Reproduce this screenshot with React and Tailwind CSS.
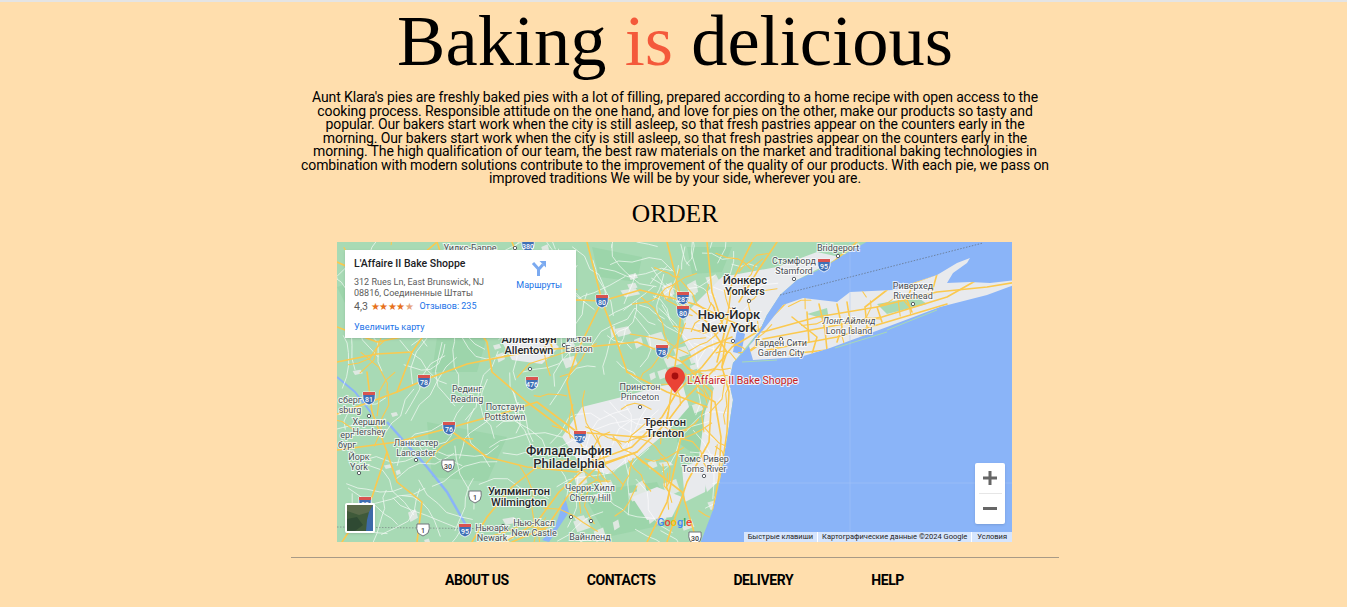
const ocean =
  'M533,-2 L503,15 486,26 460,38 443,53 430,73 423,88 412,104 396,121 392,140 396,158 391,191 383,238 376,268 363,302 L680,302 680,-2 Z';
const mainland =
  'M-2,-2 L533,-2 503,15 486,26 460,38 443,53 430,73 423,88 412,104 396,121 392,140 396,158 391,191 383,238 376,268 363,302 L-2,302 Z';
const longIsland =
  'M426,88 L446,63 466,56 500,60 513,50 556,48 576,41 600,33 620,21 633,16 630,21 616,31 610,41 633,40 653,41 680,38 680,42 650,53 603,65 550,85 493,106 463,115 416,118 412,104 Z';

const greyAreas = [
  'M350,70 L385,35 440,25 480,10 503,15 460,38 430,73 423,88 396,121 396,158 380,150 360,125 345,95 Z',
  'M385,125 L396,158 391,191 383,238 370,250 362,215 368,170 Z',
  'M245,165 L285,155 320,145 345,140 352,165 330,190 300,215 270,232 245,225 225,195 Z',
  'M170,85 L205,88 222,105 205,122 175,118 165,100 Z',
  'M295,255 L320,245 345,255 335,275 310,278 Z',
  'M345,225 L372,215 368,250 348,260 Z',
];
const darkGreen = [
  'M130,15 L185,20 205,45 165,55 120,40 Z',
  'M0,45 L60,25 110,45 75,80 20,85 Z',
  'M255,5 L305,15 300,40 262,35 Z',
  'M350,5 L395,5 385,30 355,32 Z',
  'M90,180 L170,195 150,240 95,235 Z',
  'M245,250 L320,240 340,280 270,295 Z',
  'M395,160 L375,225 340,200 345,165 Z',
  'M100,95 L150,95 140,130 95,130 Z',
];

const majorRoads = [
  'M240,58 L265,59 303,48 343,58 360,63 395,80 425,90',
  'M0,172 L60,150 87,138 130,122 200,108 250,105 300,100 325,110 345,120 370,105 395,95',
  'M0,208 L60,200 112,186 170,170 200,160 240,190 300,195 345,192',
  'M175,300 L210,285 230,255 260,225 300,210 330,180 345,160 375,130 395,105 420,90 460,50 520,0',
  'M168,300 L200,280 222,250 255,220 295,205 325,175 340,150 365,125 385,100',
  'M383,238 L390,190 392,150 385,125 388,100 395,80',
  'M376,268 L382,235 384,195 378,160 360,150',
  'M426,90 L480,75 540,65 600,50 650,45 680,40',
  'M426,97 L490,85 545,75 610,55 640,38',
  'M430,108 L500,95 550,80 610,62',
  'M452,112 L490,108 488,88 482,62',
  'M530,85 L528,65 550,48',
  'M250,0 L265,59 280,100 290,130',
  'M330,0 L345,60 340,110 330,180',
  'M415,0 L395,40 390,80 380,120',
  'M370,0 L375,50 385,80',
  'M440,0 L420,30 402,60',
  'M100,0 L120,60 150,100 155,130 190,160 230,190',
  'M30,130 L35,170 50,210 35,255 5,300',
  'M0,85 L40,100 90,90 130,70 180,60 240,58',
  'M175,0 L190,40 205,80 215,105',
  'M60,150 L75,110 110,60 120,40',
  'M110,186 L150,215 190,225 240,230 300,210',
  'M80,300 L85,260 60,240 50,210',
  'M135,300 L150,275 175,245 200,225',
  'M240,190 L230,140 240,110 265,59',
  'M345,120 L375,150 372,200 350,240 330,300',
  'M310,300 L330,260 340,215 345,190',
  'M300,215 L345,250 360,300',
  'M290,130 L330,150 370,165',
  'M345,60 L370,80 390,110 385,125',
  'M0,20 L45,40 65,30 100,0',
  'M0,120 L40,112 75,110',
  'M595,50 L600,32 576,41 570,58',
  'M500,62 L505,85 500,100',
  'M455,75 L480,95 475,112',
  'M540,65 L545,80',
  'M570,58 L575,70',
  'M470,70 L472,100',
  'M510,60 L515,92',
];

// small seeded generator, so the road net comes out the same on each run
let seed = 20240607;
function rnd() {
  seed = (seed * 1664525 + 1013904223) % 4294967296;
  return seed / 4294967296;
}

function makeRoads(count, xMin, xMax, yMin, yMax, steps, stepLen) {
  const roads = [];
  for (let i = 0; i < count; i++) {
    let x = xMin + rnd() * (xMax - xMin);
    let y = yMin + rnd() * (yMax - yMin);
    let angle = rnd() * Math.PI * 2;
    let d = `M${x.toFixed(1)},${y.toFixed(1)}`;
    for (let s = 0; s < steps; s++) {
      angle += (rnd() - 0.5) * 1.3;
      const len = stepLen * (0.6 + rnd() * 0.8);
      x += Math.cos(angle) * len;
      y += Math.sin(angle) * len;
      d += ` L${x.toFixed(1)},${y.toFixed(1)}`;
    }
    roads.push(d);
  }
  return roads;
}

function makeBlotches(count, xMin, xMax, yMin, yMax, size) {
  const spots = [];
  for (let i = 0; i < count; i++) {
    const x = xMin + rnd() * (xMax - xMin);
    const y = yMin + rnd() * (yMax - yMin);
    const w = size * (0.5 + rnd());
    const h = size * (0.4 + rnd() * 0.7);
    spots.push(
      `M${x.toFixed(1)},${y.toFixed(1)} l${w.toFixed(1)},${(-h * 0.4).toFixed(1)} l${(w * 0.3).toFixed(1)},${h.toFixed(1)} l${(-w).toFixed(1)},${(h * 0.5).toFixed(1)} Z`
    );
  }
  return spots;
}

const whiteRoads = [
  ...makeRoads(130, 0, 400, 0, 300, 5, 13),
  ...makeRoads(30, 260, 400, 0, 140, 3, 10),
];
const yellowRoads = [
  ...makeRoads(26, 0, 330, 0, 300, 4, 14),
  ...makeRoads(34, 320, 420, 20, 150, 4, 9),
  ...makeRoads(24, 220, 350, 150, 250, 4, 10),
  ...makeRoads(12, 360, 395, 130, 270, 3, 9),
  ...makeRoads(14, 440, 600, 55, 95, 2, 11),
];
const greySpots = [
  ...makeBlotches(36, 0, 390, 0, 300, 8),
  ...makeBlotches(18, 270, 400, 20, 130, 11),
  ...makeBlotches(14, 230, 380, 220, 300, 12),
];

const shields = [
  [191, 3, '380', 'i'],
  [265, 59, '80', 'i'],
  [325, 109, '78', 'i'],
  [87, 139, '78', 'i'],
  [195, 141, '476', 'i'],
  [32, 156, '81', 'i'],
  [346, 56, '287', 'i'],
  [346, 70, '80', 'i'],
  [487, 23, '95', 'i'],
  [112, 186, '76', 'i'],
  [243, 195, '276', 'i'],
  [111, 224, '30', 'u'],
  [138, 255, '1', 'u'],
  [86, 288, '1', 'u'],
  [128, 288, '95', 'i'],
  [28, 261, '83', 'i'],
  [358, 296, '30', 'u'],
];

// [x, y, first line, second line, class of the text]
const labels = [
  [501, 9, 'Bridgeport', '', 'city'],
  [457, 22, 'Стэмфорд', 'Stamford', 'city'],
  [408, 42, 'Йонкерс', 'Yonkers', 'big'],
  [392, 77, 'Нью-Йорк', 'New York', 'huge'],
  [576, 47, 'Риверхед', 'Riverhead', 'city'],
  [512, 82, 'Лонг-Айленд', 'Long Island', 'island'],
  [444, 104, 'Гарден Сити', 'Garden City', 'city'],
  [367, 220, 'Томс Ривер', 'Toms River', 'city'],
  [303, 148, 'Принстон', 'Princeton', 'city'],
  [328, 184, 'Трентон', 'Trenton', 'big'],
  [232, 213, 'Филадельфия', 'Philadelphia', 'huge'],
  [253, 249, 'Черри-Хилл', 'Cherry Hill', 'city'],
  [182, 253, 'Уилмингтон', 'Wilmington', 'big'],
  [197, 284, 'Нью-Касл', 'New Castle', 'city'],
  [155, 289, 'Ньюарк', 'Newark', 'city'],
  [192, 101, 'Аллентаун', 'Allentown', 'big'],
  [242, 100, 'Истон', 'Easton', 'city'],
  [130, 150, 'Рединг', 'Reading', 'city'],
  [168, 168, 'Потстаун', 'Pottstown', 'city'],
  [32, 183, 'Хершли', 'Hershey', 'city'],
  [79, 204, 'Ланкастер', 'Lancaster', 'city'],
  [22, 218, 'Йорк', 'York', 'city'],
  [13, 161, 'сберг', 'sburg', 'city'],
  [10, 196, 'ерг', 'бург', 'city'],
  [133, 9, 'Уилкс-Барре', '', 'city'],
  [253, 298, 'Вайнленд', '', 'city'],
];

const dots = [
  [178, 6], [501, 14], [457, 37], [412, 59], [396, 99], [576, 62], [444, 97], [367, 234],
  [303, 165], [312, 180], [234, 275], [254, 279], [183, 312], [193, 127], [227, 103],
  [168, 173], [79, 218], [22, 231], [32, 174], [166, 284], [195, 262],
];

const labelStyles = {
  city: 'fill-[#4a4f55] text-[9px]',
  island: 'fill-[#4a4f55] text-[9px]',
  big: 'fill-[#26282b] text-[11px] font-medium',
  huge: 'fill-[#26282b] text-[13px] font-medium',
};

function Shield({ x, y, text, type }) {
  if (type === 'u') {
    return (
      <g>
        <path d={`M${x - 6},${y - 6} h12 q1,5 -1,9 q-3,2 -5,3 q-2,-1 -5,-3 q-2,-4 -1,-9 Z`} fill="#fff" stroke="#70757a" strokeWidth="1" />
        <text x={x} y={y + 3} textAnchor="middle" className="fill-[#3c4043] text-[7px] font-medium">{text}</text>
      </g>
    );
  }
  return (
    <g>
      <path d={`M${x - 6},${y - 6} h12 q1,8 -2,11 q-2,1 -4,2 q-2,-1 -4,-2 q-3,-3 -2,-11 Z`} fill="#3f6fb5" stroke="#fff" strokeWidth="0.8" />
      <rect x={x - 6} y={y - 6} width="12" height="3" fill="#d9534f" />
      <text x={x} y={y + 4} textAnchor="middle" className="fill-white text-[7px] font-medium">{text}</text>
    </g>
  );
}

function MapDrawing() {
  return (
    <svg viewBox="0 0 675 300" className="block h-[300px] w-[675px] font-['Roboto',sans-serif]">
      <defs>
        <clipPath id="land">
          <path d={mainland} />
        </clipPath>
        <clipPath id="land-all">
          <path d={`${mainland} ${longIsland}`} />
        </clipPath>
      </defs>
      <rect width="675" height="300" fill="#a8dab5" />
      <g clipPath="url(#land)">
        {darkGreen.map((d) => (
          <path key={d} d={d} fill="#9dd5ab" />
        ))}
        {greySpots.map((d) => (
          <path key={d} d={d} fill="#dfe8e2" />
        ))}
        {greyAreas.map((d) => (
          <path key={d} d={d} fill="#e8eaed" />
        ))}
        <path d="M50,180 L90,225 110,250 130,285" fill="none" stroke="#8ab4f8" strokeWidth="2.5" />
        <path d="M0,135 L18,150 35,172" fill="none" stroke="#8ab4f8" strokeWidth="2" />
      </g>
      <path d={ocean} fill="#8ab4f8" />
      <path d={longIsland} fill="#e8eaed" />
      <path d="M540,62 L580,55 590,62 550,72 Z M470,72 L490,66 492,78 Z" fill="#a8dab5" />
      <path d="M405,120 L440,118 M498,106 L550,90 M550,88 L600,68" fill="none" stroke="#a8dab5" strokeWidth="1" />
      <path d="M400,88 L408,92 404,112 396,110 Z" fill="#8ab4f8" />
      <path d="M228,255 L218,285 205,298 212,300 232,270 Z" fill="#8ab4f8" />
      <path d="M513,0 V300 M383,241 H675" stroke="#a9c7f8" strokeWidth="0.7" opacity="0.7" />
      <path d="M0,285 L175,287" stroke="#70757a" strokeWidth="0.6" strokeDasharray="1.5 1.5" />
      <path d="M443,53 L646,1" stroke="#5f6b7a" strokeWidth="0.7" strokeDasharray="1.5 1.5" fill="none" />
      <g fill="none" strokeLinejoin="round" strokeLinecap="round" clipPath="url(#land-all)">
        <g stroke="#ffffff" strokeWidth="0.8" opacity="0.8">
          {whiteRoads.map((d) => (
            <path key={d} d={d} />
          ))}
        </g>
        <g stroke="#fbc94f" strokeWidth="1.1">
          {yellowRoads.map((d) => (
            <path key={d} d={d} />
          ))}
        </g>
        <g stroke="#fbc94f" strokeWidth="1.6">
          {majorRoads.map((d) => (
            <path key={d} d={d} />
          ))}
        </g>
      </g>
      {shields.map(([x, y, text, type]) => (
        <Shield key={`${x}-${y}`} x={x} y={y} text={text} type={type} />
      ))}
      {dots.map(([x, y]) => (
        <circle key={`${x}-${y}`} cx={x} cy={y} r="1.7" fill="#fff" stroke="#4a4f55" strokeWidth="0.9" />
      ))}
      <g textAnchor="middle" stroke="#ffffff" strokeWidth="2" strokeOpacity="0.75" style={{ paintOrder: 'stroke' }}>
        {labels.map(([x, y, ru, en, kind]) => {
          const gap = kind === 'huge' ? 13 : kind === 'big' ? 11 : 9.5;
          return (
            <text key={`${x}-${y}`} x={x} className={labelStyles[kind]}>
              <tspan x={x} y={y} fontStyle={kind === 'island' ? 'italic' : undefined}>{ru}</tspan>
              {en && <tspan x={x} y={y + gap}>{en}</tspan>}
            </text>
          );
        })}
      </g>
      <path d="M338,151 C331,142 328,139 328,135 C328,129 333,125 338,125 C343,125 348,129 348,135 C348,139 345,142 338,151 Z" fill="#ea4335" />
      <circle cx="338" cy="134" r="3.4" fill="#a50e0e" />
      <text x="350" y="142" stroke="#fff" strokeWidth="2" strokeOpacity="0.8" style={{ paintOrder: 'stroke' }} className="fill-[#c5221f] text-[10.6px]">
        L'Affaire II Bake Shoppe
      </text>
    </svg>
  );
}

function Stars() {
  return (
    <span className="text-[9.5px] leading-none tracking-[-0.5px] text-[#e7711b]">
      ★★★★<span className="text-[#e7a27a]">★</span>
    </span>
  );
}

function InfoCard() {
  return (
    <div className="absolute left-2 top-2 flex h-[88px] w-[231px] justify-between bg-white pl-[9px] pr-[14px] pt-[9px] font-['Roboto',sans-serif] shadow-sm">
      <div className="w-[140px]">
        <div className="whitespace-nowrap text-[10.5px] font-medium leading-[10px] text-[#202124]">L'Affaire II Bake Shoppe</div>
        <div className="mt-[8px] whitespace-nowrap text-[9px] leading-[11px] text-[#5b5b5b]">
          312 Rues Ln, East Brunswick, NJ
          <br />
          08816, Соединенные Штаты
        </div>
        <div className="mt-[1px] flex items-center whitespace-nowrap">
          <span className="mr-[3px] text-[10.5px] leading-[13px] text-[#5b5b5b]">4,3</span>
          <Stars />
          <span className="ml-[6px] text-[9px] text-[#1a73e8]">Отзывов: 235</span>
        </div>
        <div className="mt-[9px] whitespace-nowrap text-[9px] leading-[11px] text-[#1a73e8]">Увеличить карту</div>
      </div>
      <div className="flex flex-col items-center pt-[1px]">
        <svg width="16" height="16" viewBox="0 0 16 16" fill="none" stroke="#7baaf0" strokeWidth="3">
          <path d="M7.5,16 V9 L2,3" />
          <path d="M7.5,9.5 L12,4.5" />
          <path d="M8.5,1 H15 V7.5 Z" fill="#7baaf0" stroke="none" />
        </svg>
        <span className="mt-1 whitespace-nowrap text-[9px] leading-[10px] text-[#1a73e8]">Маршруты</span>
      </div>
    </div>
  );
}

function SatelliteThumb() {
  return (
    <div className="absolute bottom-[9px] left-2 h-[30px] w-[30px] overflow-hidden rounded-[2px] border-2 border-white shadow">
      <svg viewBox="0 0 26 26" className="block h-full w-full">
        <rect width="26" height="26" fill="#3f5a3a" />
        <path d="M0,0 H26 V6 L12,10 0,6 Z" fill="#5a6a4a" />
        <path d="M0,14 L10,12 16,20 8,26 H0 Z" fill="#2f4a33" />
        <path d="M26,0 V26 H19 L20,15 22,7 Z" fill="#3d6aa8" />
      </svg>
    </div>
  );
}

function ZoomButtons() {
  return (
    <div className="absolute right-[7px] top-[221px] flex h-[61px] w-[30px] flex-col items-center rounded-[2px] bg-white shadow">
      <div className="flex h-[30px] items-center justify-center">
        <svg width="14" height="14" viewBox="0 0 14 14"><path d="M5.5,0 h3 v5.5 h5.5 v3 h-5.5 v5.5 h-3 v-5.5 h-5.5 v-3 h5.5 Z" fill="#666" /></svg>
      </div>
      <div className="h-px w-[23px] bg-[#e6e6e6]" />
      <div className="flex h-[30px] items-center justify-center">
        <div className="h-[3px] w-[14px] bg-[#666]" />
      </div>
    </div>
  );
}

function Attribution() {
  return (
    <div className="absolute bottom-0 right-0 flex h-[10px] items-center whitespace-nowrap bg-white/65 font-['Roboto',sans-serif] text-[7.5px] leading-[10px] text-[#222]">
      <span className="pl-[4px] pr-[4px]">Быстрые клавиши</span>
      <span className="border-l border-white px-[4px]">Картографические данные ©2024 Google</span>
      <span className="border-l border-white px-[5px]">Условия</span>
    </div>
  );
}

function GoogleLogo() {
  return (
    <div className="absolute left-[320px] top-[274px] font-['Roboto',sans-serif] text-[11px] font-medium leading-[14px]">
      <span className="text-[#4285f4]">G</span>
      <span className="text-[#ea4335]">o</span>
      <span className="text-[#fbbc05]">o</span>
      <span className="text-[#4285f4]">g</span>
      <span className="text-[#34a853]">l</span>
      <span className="text-[#ea4335]">e</span>
    </div>
  );
}

export default function App() {
  return (
    <div className="h-[607px] overflow-hidden border-t-2 border-[#e4e4e4] bg-[#ffdead] text-black">
      <div className="ml-[291px] flex w-[768px] flex-col items-center">
        <h1 className="whitespace-nowrap font-['Liberation_Serif',serif] text-[72.5px] font-normal leading-[77px]">
          Baking <span className="text-[#f4593b]">is</span> delicious
        </h1>
        <p className="mt-[12px] w-[748px] text-center font-['Roboto',sans-serif] text-[14px] leading-[13.5px] tracking-[-0.12px]">
          Aunt Klara's pies are freshly baked pies with a lot of filling, prepared according to a home recipe with open access to the cooking process. Responsible attitude on the one hand, and love for pies on the other, make our products so tasty and popular. Our bakers start work when the city is still asleep, so that fresh pastries appear on the counters early in the morning. Our bakers start work when the city is still asleep, so that fresh pastries appear on the counters early in the morning. The high qualification of our team, the best raw materials on the market and traditional baking technologies in combination with modern solutions contribute to the improvement of the quality of our products. With each pie, we pass on improved traditions We will be by your side, wherever you are.
        </p>
        <h2 className="mt-[13px] font-['Liberation_Serif',serif] text-[25.5px] font-normal leading-[30px]">ORDER</h2>
        <div className="relative ml-[-1px] mt-[13px] h-[300px] w-[675px] overflow-hidden">
          <MapDrawing />
          <InfoCard />
          <SatelliteThumb />
          <GoogleLogo />
          <ZoomButtons />
          <Attribution />
        </div>
        <footer className="mt-[15px] w-full border-t border-[#a89a86] pt-[14px]">
          <nav className="ml-[-1px] flex justify-center gap-[78px] font-['Roboto',sans-serif] text-[14px] font-bold leading-[16px] tracking-[-0.4px]">
            <a>ABOUT US</a>
            <a>CONTACTS</a>
            <a>DELIVERY</a>
            <a>HELP</a>
          </nav>
        </footer>
      </div>
    </div>
  );
}
